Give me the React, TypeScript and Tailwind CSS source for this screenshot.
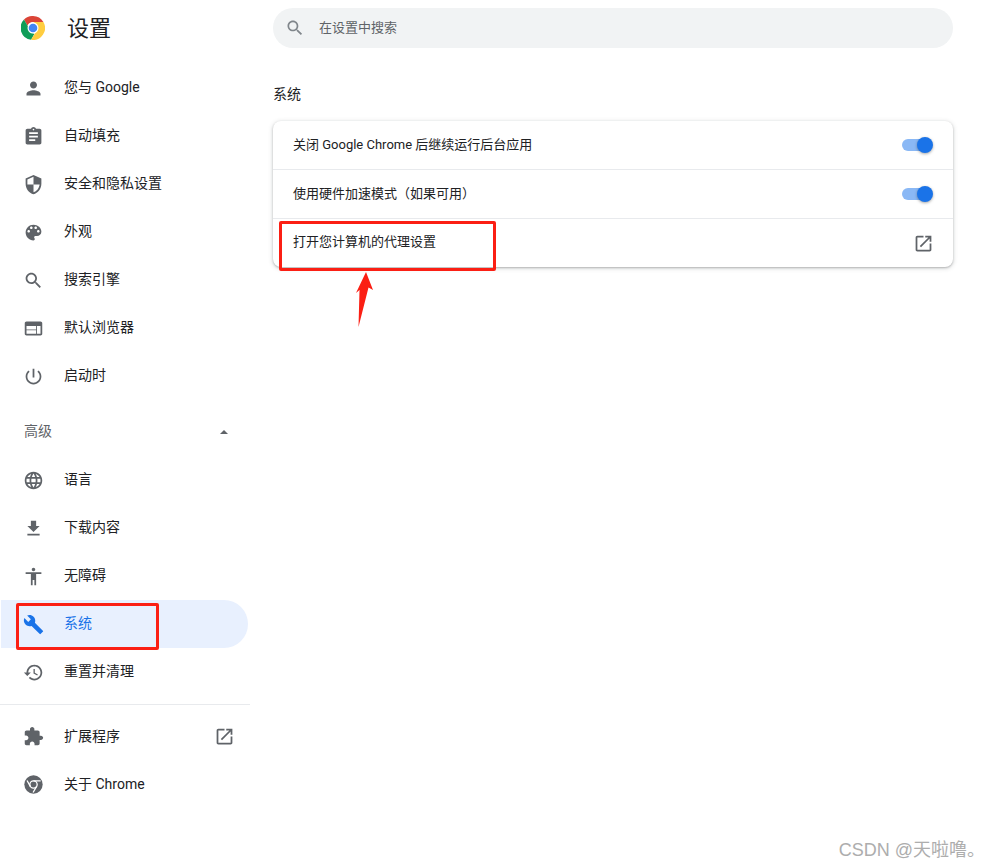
import React from 'react';

const FONT = 'font-["Roboto","Noto_Sans_CJK_SC",sans-serif]';

const paths = {
  person: 'M12 12c2.21 0 4-1.79 4-4s-1.79-4-4-4-4 1.79-4 4 1.79 4 4 4zm0 2c-2.67 0-8 1.34-8 4v2h16v-2c0-2.66-5.33-4-8-4z',
  assignment: 'M19 3h-4.18C14.4 1.84 13.3 1 12 1c-1.3 0-2.4.84-2.82 2H5c-1.1 0-2 .9-2 2v14c0 1.1.9 2 2 2h14c1.1 0 2-.9 2-2V5c0-1.1-.9-2-2-2zm-7 0c.55 0 1 .45 1 1s-.45 1-1 1-1-.45-1-1 .45-1 1-1zm2 14H7v-2h7v2zm3-4H7v-2h10v2zm0-4H7V7h10v2z',
  security: 'M12 1L3 5v6c0 5.55 3.84 10.74 9 12 5.16-1.26 9-6.45 9-12V5l-9-4zm0 10.99h7c-.53 4.12-3.28 7.79-7 8.94V12H5V6.3l7-3.11v8.8z',
  palette: 'M12 3c-4.97 0-9 4.03-9 9s4.03 9 9 9c.83 0 1.5-.67 1.5-1.5 0-.39-.15-.74-.39-1.01-.23-.26-.38-.61-.38-.99 0-.83.67-1.5 1.5-1.5H16c2.76 0 5-2.24 5-5 0-4.42-4.03-8-9-8zm-5.5 9c-.83 0-1.5-.67-1.5-1.5S5.67 9 6.5 9 8 9.67 8 10.5 7.33 12 6.5 12zm3-4C8.67 8 8 7.33 8 6.5S8.67 5 9.5 5s1.5.67 1.5 1.5S10.33 8 9.5 8zm5 0c-.83 0-1.5-.67-1.5-1.5S13.67 5 14.5 5s1.5.67 1.5 1.5S15.33 8 14.5 8zm3 4c-.83 0-1.5-.67-1.5-1.5S16.67 9 17.5 9s1.5.67 1.5 1.5-.67 1.5-1.5 1.5z',
  search: 'M15.5 14h-.79l-.28-.27C15.41 12.59 16 11.11 16 9.5 16 5.91 13.09 3 9.5 3S3 5.91 3 9.5 5.91 16 9.5 16c1.61 0 3.09-.59 4.23-1.57l.27.28v.79l5 4.99L20.49 19l-4.99-5zm-6 0C7.01 14 5 11.99 5 9.5S7.01 5 9.5 5 14 7.01 14 9.5 11.99 14 9.5 14z',
  web: 'M20 4H4c-1.1 0-1.99.9-1.99 2L2 18c0 1.1.9 2 2 2h16c1.1 0 2-.9 2-2V6c0-1.1-.9-2-2-2zm-5 14H4v-4h11v4zm0-5H4V9h11v4zm5 5h-4V9h4v9z',
  power: 'M13 3h-2v10h2V3zm4.83 2.17l-1.42 1.42C17.99 7.86 19 9.81 19 12c0 3.87-3.13 7-7 7s-7-3.13-7-7c0-2.19 1.01-4.14 2.58-5.42L6.17 5.17C4.23 6.82 3 9.26 3 12c0 4.97 4.03 9 9 9s9-4.03 9-9c0-2.74-1.23-5.18-3.17-6.83z',
  language: 'M11.99 2C6.47 2 2 6.48 2 12s4.47 10 9.99 10C17.52 22 22 17.52 22 12S17.52 2 11.99 2zm6.93 6h-2.95c-.32-1.25-.78-2.45-1.38-3.56 1.84.63 3.37 1.91 4.33 3.56zM12 4.04c.83 1.2 1.48 2.53 1.91 3.96h-3.82c.43-1.43 1.08-2.76 1.91-3.96zM4.26 14C4.1 13.36 4 12.69 4 12s.1-1.36.26-2h3.38c-.08.66-.14 1.32-.14 2 0 .68.06 1.34.14 2H4.26zm.82 2h2.95c.32 1.25.78 2.45 1.38 3.56-1.84-.63-3.37-1.9-4.33-3.56zm2.95-8H5.08c.96-1.66 2.49-2.93 4.33-3.56C8.81 5.55 8.35 6.75 8.03 8zM12 19.96c-.83-1.2-1.48-2.53-1.91-3.96h3.82c-.43 1.43-1.08 2.76-1.91 3.96zM14.34 14H9.66c-.09-.66-.16-1.32-.16-2 0-.68.07-1.35.16-2h4.68c.09.65.16 1.32.16 2 0 .68-.07 1.34-.16 2zm.25 5.56c.6-1.11 1.06-2.31 1.38-3.56h2.95c-.96 1.65-2.49 2.93-4.33 3.56zM16.36 14c.08-.66.14-1.32.14-2 0-.68-.06-1.34-.14-2h3.38c.16.64.26 1.31.26 2s-.1 1.36-.26 2h-3.38z',
  download: 'M19 9h-4V3H9v6H5l7 7 7-7zM5 18v2h14v-2H5z',
  accessibility: 'M12 2c1.1 0 2 .9 2 2s-.9 2-2 2-2-.9-2-2 .9-2 2-2zm9 7h-6v13h-2v-6h-2v6H9V9H3V7h18v2z',
  build: 'M22.7 19l-9.1-9.1c.9-2.3.4-5-1.5-6.9-2-2-5-2.4-7.4-1.3L9 6 6 9 1.6 4.7C.4 7.1.9 10.1 2.9 12.1c1.9 1.9 4.6 2.4 6.9 1.5l9.1 9.1c.4.4 1 .4 1.4 0l2.3-2.3c.5-.4.5-1.1.1-1.4z',
  restore: 'M13 3c-4.97 0-9 4.03-9 9H1l3.89 3.89.07.14L9 12H6c0-3.87 3.13-7 7-7s7 3.13 7 7-3.13 7-7 7c-1.93 0-3.68-.79-4.94-2.06l-1.42 1.42C8.27 19.99 10.51 21 13 21c4.97 0 9-4.03 9-9s-4.03-9-9-9zm-1 5v5l4.28 2.54.72-1.21-3.5-2.08V8H12z',
  extension: 'M20.5 11H19V7c0-1.1-.9-2-2-2h-4V3.5C13 2.12 11.88 1 10.5 1S8 2.12 8 3.5V5H4c-1.1 0-1.99.9-1.99 2v3.8H3.5c1.49 0 2.7 1.21 2.7 2.7s-1.21 2.7-2.7 2.7H2V20c0 1.1.9 2 2 2h3.8v-1.5c0-1.49 1.21-2.7 2.7-2.7 1.49 0 2.7 1.21 2.7 2.7V22H17c1.1 0 2-.9 2-2v-4h1.5c1.38 0 2.5-1.12 2.5-2.5S21.88 11 20.5 11z',
  open: 'M19 19H5V5h7V3H5c-1.11 0-2 .9-2 2v14c0 1.1.89 2 2 2h14c1.1 0 2-.9 2-2v-7h-2v7zM14 3v2h3.59l-9.83 9.83 1.41 1.41L19 6.41V10h2V3h-7z',
};

type IconName = keyof typeof paths;

const Icon = ({ name, className }: { name: IconName; className: string }) => (
  <svg viewBox="0 0 24 24" fill="currentColor" className={className}>
    <path d={paths[name]} />
  </svg>
);

// grey chrome mark used by the "about" row
const ChromeMono = () => (
  <svg viewBox="0 0 24 24" className="w-[21px] h-[21px] shrink-0 text-[#5f6368]">
    <circle cx="12" cy="12" r="10.5" fill="currentColor" />
    <circle cx="12" cy="12" r="4.2" fill="none" stroke="#fff" strokeWidth="1.5" />
    <path d="M12 7.8h8.2M8.4 14.1 4.6 7.4M15.6 14.1l-4.1 7" stroke="#fff" strokeWidth="1.5" fill="none" />
  </svg>
);

const ChromeLogo = () => (
  <svg viewBox="0 0 48 48" className="w-[24px] h-[24px] shrink-0">
    <path d="M24 0a24 24 0 0 1 20.8 12H24a12 12 0 0 0-11.1 7.4L6 7.2A24 24 0 0 1 24 0z" fill="#db4437" />
    <path d="M6 7.2 18 27.9a12 12 0 0 0 9 7.7L20.2 47.7A24 24 0 0 1 6 7.2z" fill="#0f9d58" />
    <path d="M44.8 12A24 24 0 0 1 20.2 47.7L30.6 30A12 12 0 0 0 24 12z" fill="#ffcd40" />
    <circle cx="24" cy="24" r="11" fill="#fff" />
    <circle cx="24" cy="24" r="8.6" fill="#4285f4" />
  </svg>
);

const NavItem = ({
  icon,
  label,
  active,
  external,
}: {
  icon: IconName;
  label: string;
  active?: boolean;
  external?: boolean;
}) => (
  <div
    className={`flex items-center h-12 ml-px w-[247px] pl-[22px] rounded-r-full text-sm ${
      active ? 'bg-[#e8f0fe] text-[#1a73e8]' : 'text-[#202124]'
    }`}
  >
    <Icon name={icon} className={`w-[21px] h-[21px] shrink-0 ${active ? 'text-[#1a73e8]' : 'text-[#5f6368]'}`} />
    <span className={`ml-[20px] ${external ? '' : 'pb-[2px]'}`}>{label}</span>
    {external && <Icon name="open" className="w-[21px] h-[21px] ml-auto mr-[13px] text-[#5f6368]" />}
  </div>
);

const Toggle = () => (
  <div className="relative w-[27px] h-[12px] mr-[5px] rounded-full bg-[#8ab8f5]">
    <div className="absolute -right-[4px] -top-[2px] w-4 h-4 rounded-full bg-[#1a73e8] shadow-[0_1px_3px_rgba(0,0,0,0.35)]" />
  </div>
);

const SettingRow = ({
  label,
  children,
  className,
  labelClass,
}: {
  label: string;
  children: React.ReactNode;
  className: string;
  labelClass?: string;
}) => (
  <div className={`flex items-center justify-between pl-5 pr-[19px] text-[13px] text-[#202124] ${className}`}>
    <span className={labelClass}>{label}</span>
    {children}
  </div>
);

export default function App() {
  return (
    <div className={`relative flex h-[868px] w-[993px] overflow-hidden bg-white ${FONT}`}>
      <aside className="w-[250px] shrink-0">
        <div className="flex items-center h-[64px] pb-[8px] pl-[21px]">
          <ChromeLogo />
          <h1 className="ml-[22px] text-[22px] font-normal text-[#202124]">设置</h1>
        </div>
        <NavItem icon="person" label="您与 Google" />
        <NavItem icon="assignment" label="自动填充" />
        <NavItem icon="security" label="安全和隐私设置" />
        <NavItem icon="palette" label="外观" />
        <NavItem icon="search" label="搜索引擎" />
        <NavItem icon="web" label="默认浏览器" />
        <NavItem icon="power" label="启动时" />
        <div className="flex items-center justify-between h-12 mt-2 pl-6 pr-[22px] text-sm text-[#5f6368]">
          <span className="pb-[2px]">高级</span>
          <span className="w-0 h-0 border-x-[4px] border-x-transparent border-b-[4px] border-b-[#5f6368]" />
        </div>
        <NavItem icon="language" label="语言" />
        <NavItem icon="download" label="下载内容" />
        <NavItem icon="accessibility" label="无障碍" />
        <NavItem icon="build" label="系统" active />
        <NavItem icon="restore" label="重置并清理" />
        <div className="mt-[8px] mb-[7px] border-t border-[#e8eaed]" />
        <NavItem icon="extension" label="扩展程序" external />
        <div className="flex items-center h-12 pl-[23px] text-sm text-[#202124]">
          <ChromeMono />
          <span className="ml-[20px]">关于 Chrome</span>
        </div>
      </aside>

      <main className="flex-1 pl-[23px] pr-[40px] pt-2">
        <div className="flex items-center h-10 rounded-full bg-[#f1f3f4] pl-[12px] text-[13px] text-[#5f6368]">
          <Icon name="search" className="w-5 h-5 text-[#80868b]" />
          <span className="ml-[14px]">在设置中搜索</span>
        </div>
        <h2 className="mt-[36px] text-sm font-normal text-[#202124]">系统</h2>
        <div className="mt-[17px] rounded-lg bg-white shadow-[0_1px_2px_rgba(60,64,67,0.3),0_1px_4px_1px_rgba(60,64,67,0.15)]">
          <SettingRow label="关闭 Google Chrome 后继续运行后台应用" className="h-[48px]">
            <Toggle />
          </SettingRow>
          <SettingRow label="使用硬件加速模式（如果可用）" className="h-[49px] border-t border-[#e8eaed]">
            <Toggle />
          </SettingRow>
          <SettingRow label="打开您计算机的代理设置" labelClass="pb-[2px]" className="h-[49px] border-t border-[#e8eaed]">
            <Icon name="open" className="w-[21px] h-[21px] text-[#5f6368]" />
          </SettingRow>
        </div>
      </main>

      {/* screenshot annotations */}
      <div className="absolute left-[16px] top-[603px] w-[143px] h-[47px] rounded-[2px] border-[3px] border-[#fb1f14]" />
      <div className="absolute left-[279px] top-[221px] w-[217px] h-[50px] rounded-[2px] border-[3px] border-[#fb1f14]" />
      <svg className="absolute left-[350px] top-[270px] w-[26px] h-[60px]" viewBox="0 0 26 60">
        <path d="M16 2 23 20 18.5 17.5 8.5 57 9.5 20 6 23z" fill="#fb1f14" />
      </svg>
      <span className='absolute right-[8px] top-[837px] text-[18px] text-[#adadad] font-["Liberation_Sans","Noto_Sans_CJK_SC",sans-serif]'>CSDN @天啦噜。</span>
    </div>
  );
}
